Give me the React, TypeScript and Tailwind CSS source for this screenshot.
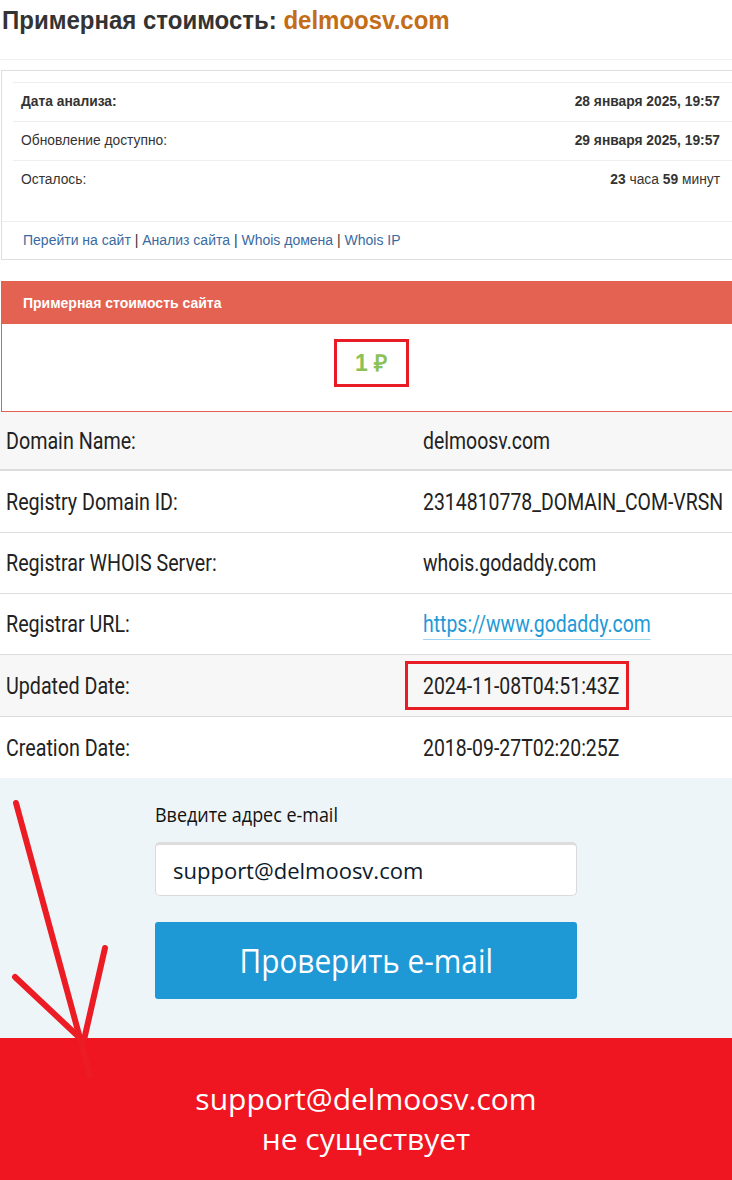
import React from 'react';

const infoRows = [
  { label: 'Дата анализа:', bold: true, value: <b>28 января 2025, 19:57</b> },
  { label: 'Обновление доступно:', bold: false, value: <b>29 января 2025, 19:57</b> },
  {
    label: 'Осталось:',
    bold: false,
    value: (
      <span>
        <b>23</b> часа <b>59</b> минут
      </span>
    ),
  },
];

const whoisRows = [
  { label: 'Domain Name:', value: 'delmoosv.com', gray: true, h: 'h-[59px] border-b-2 border-[#dcdcdc]' },
  { label: 'Registry Domain ID:', value: '2314810778_DOMAIN_COM-VRSN', h: 'h-[62px] border-b border-[#dddddd]' },
  { label: 'Registrar WHOIS Server:', value: 'whois.godaddy.com', h: 'h-[61px] border-b border-[#dddddd]' },
  { label: 'Registrar URL:', value: 'https://www.godaddy.com', link: true, h: 'h-[61px] border-b border-[#dddddd]' },
  { label: 'Updated Date:', value: '2024-11-08T04:51:43Z', gray: true, marked: true, h: 'h-[62px] border-b border-[#dddddd]' },
  { label: 'Creation Date:', value: '2018-09-27T02:20:25Z', h: 'h-[61px]' },
];

const App = () => {
  return (
    <div className="w-[732px] h-[1180px] overflow-hidden bg-white relative">
      {/* Page title */}
      <div className="font-['Liberation_Sans',Arial,sans-serif] pt-[5px] pl-[2px] h-[60px] border-b border-[#f0f0f0]">
        <h1 className="text-[24px] font-bold text-[#333] leading-[28px] scale-y-[1.08] origin-top">
          Примерная стоимость: <span className="text-[#c36d16]">delmoosv.com</span>
        </h1>
      </div>

      {/* Analysis info */}
      <div className="font-['Liberation_Sans',Arial,sans-serif] mt-[10px] ml-[1px] border border-[#dedede] border-r-0 text-[13.8px] text-[#333]">
        <div className="ml-[11px] mt-[11px] border-t border-[#eeeeee]">
          {infoRows.map((r, i) => (
            <div
              key={i}
              className={`h-[39px] flex items-center justify-between pl-[8px] pr-[12px] ${
                i < 2 ? 'border-b border-[#eeeeee]' : ''
              }`}
            >
              <span className={r.bold ? 'font-bold' : ''}>{r.label}</span>
              <span>{r.value}</span>
            </div>
          ))}
        </div>
        <div className="h-[21px]" />
        <div className="border-t border-[#eeeeee] h-[38px] flex items-center pl-[21px] text-[14px] text-[#333]">
          <a className="text-[#3b6aa0]">Перейти на сайт</a>&nbsp;|&nbsp;
          <a className="text-[#3b6aa0]">Анализ сайта</a>&nbsp;|&nbsp;
          <a className="text-[#3b6aa0]">Whois домена</a>&nbsp;|&nbsp;
          <a className="text-[#3b6aa0]">Whois IP</a>
        </div>
      </div>

      {/* Estimated cost */}
      <div className="font-['Liberation_Sans',Arial,sans-serif] mt-[21px] ml-[1px] border border-[#e36150] border-r-0">
        <div className="bg-[#e36252] h-[42px] flex items-center pl-[21px] text-white text-[14px] font-bold">
          Примерная стоимость сайта
        </div>
        <div className="h-[87px] flex items-start justify-center pt-[15px]">
          <div className="border-[3px] border-[#e81c24] w-[75px] h-[48px] flex items-center justify-center ml-[8px] text-[#8cc157] text-[23px] font-bold">
            1 ₽
          </div>
        </div>
      </div>

      {/* Whois table */}
      <div className="font-['Roboto',sans-serif] text-[#222] text-[24px]">
        {whoisRows.map((r, i) => (
          <div key={i} className={`${r.h} flex items-center overflow-hidden ${r.gray ? 'bg-[#f7f7f7]' : 'bg-white'}`}>
            <div className="w-[417px] shrink-0 pl-[6px]">
              <span className="scale-x-[0.82] origin-left inline-block whitespace-nowrap">{r.label}</span>
            </div>
            {r.marked ? (
              <div className="shrink-0 border-[3px] border-[#e81c24] h-[49px] w-[224px] -ml-[12px] flex items-center pl-[15px]">
                <span className="scale-x-[0.81] origin-left inline-block whitespace-nowrap">{r.value}</span>
              </div>
            ) : r.link ? (
              <div className="pl-[6px] shrink-0">
                <span className="scale-x-[0.81] origin-left inline-block whitespace-nowrap text-[#1e9ad8] border-b border-[#9fd6f2] leading-[30px]">
                  {r.value}
                </span>
              </div>
            ) : (
              <div className="pl-[6px] shrink-0">
                <span className="scale-x-[0.81] origin-left inline-block whitespace-nowrap">{r.value}</span>
              </div>
            )}
          </div>
        ))}
      </div>

      {/* Email check */}
      <div className="bg-[#eef5f9] h-[260px] font-['Open_Sans',sans-serif] pt-[23px]">
        <div className="w-[422px] ml-[155px]">
          <div className="text-[19.5px] text-[#111] scale-x-[0.92] origin-left leading-[28px]">Введите адрес e-mail</div>
          <div className="mt-[13px] h-[54px] bg-white rounded-[5px] border border-[#dadada] border-t-[3px] border-t-[#dddddd] flex items-center pl-[17px] text-[22px] text-[#0b1b2b]">
            support@delmoosv.com
          </div>
          <div className="mt-[26px] h-[77px] bg-[#1f98d6] rounded-[3px] flex items-center justify-center text-white text-[32px]">
            <span className="scale-x-[0.93] inline-block">Проверить e-mail</span>
          </div>
        </div>
      </div>

      {/* Result */}
      <div className="bg-[#ef1622] h-[142px] font-['Open_Sans',sans-serif] text-white text-[30px] leading-[40px] flex flex-col items-center pt-[41px]">
        <div>support@delmoosv.com</div>
        <div>не существует</div>
      </div>

      {/* Hand-drawn arrow */}
      <svg className="absolute left-0 top-0 pointer-events-none" width="732" height="1180">
        <g stroke="#ec1c24" strokeWidth="6" strokeLinecap="round" fill="none">
          <path d="M16 803 Q50 930 90 1075" />
          <path d="M15 977 L82 1040" />
          <path d="M105 948 L84 1040" />
        </g>
      </svg>
    </div>
  );
};

export default App;
